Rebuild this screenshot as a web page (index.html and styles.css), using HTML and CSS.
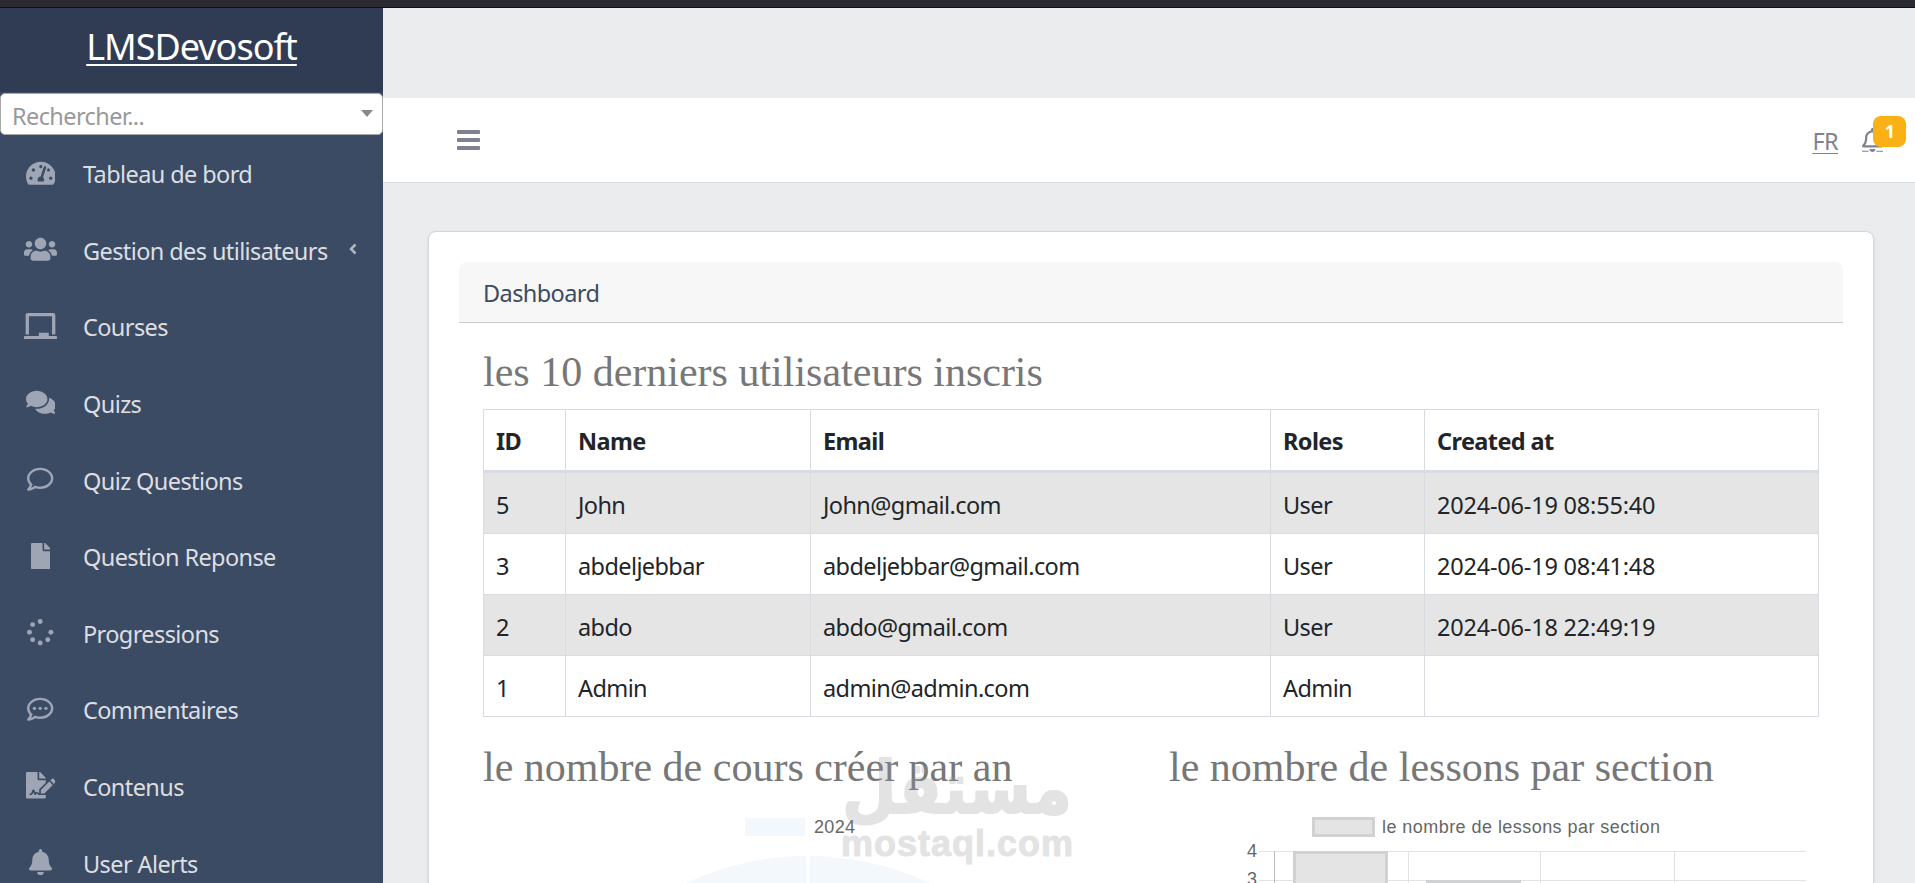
FILE: index.html
```html
<!DOCTYPE html>
<html lang="fr">
<head>
    <meta charset="UTF-8">
    <title>LMSDevosoft</title>
    <link rel="stylesheet" href="styles.css">
</head>
<body>
    <div class="window-edge"></div>

    <div class="wrapper">
        <aside class="sidebar">
            <div class="sidebar-brand"><a href="#">LMSDevosoft</a></div>
            <div class="search-select">
                <span>Rechercher...</span>
                <i class="caret"></i>
            </div>
            <nav class="sidebar-nav">
                <a class="nav-item">
                    <span class="nav-icon"><svg viewBox="0 0 576 512"><path d="M288 32C128.94 32 0 160.94 0 320c0 52.8 14.25 102.26 39.06 144.8 5.61 9.62 16.3 15.2 27.44 15.2h443c11.14 0 21.83-5.58 27.44-15.2C561.75 422.26 576 372.8 576 320c0-159.06-128.94-288-288-288zm0 64c14.71 0 26.58 10.13 30.32 23.65-1.11 2.26-2.64 4.23-3.45 6.67l-9.22 27.67c-5.13 3.49-10.97 6.01-17.64 6.01-17.67 0-32-14.33-32-32S270.33 96 288 96zM96 384c-17.67 0-32-14.33-32-32s14.33-32 32-32 32 14.33 32 32-14.33 32-32 32zm48-160c-17.67 0-32-14.33-32-32s14.33-32 32-32 32 14.33 32 32-14.33 32-32 32zm246.77-72.41l-61.33 184C343.13 347.33 352 364.54 352 384c0 11.72-3.38 22.55-8.88 32H232.88c-5.5-9.45-8.88-20.28-8.88-32 0-33.94 26.5-61.43 59.9-63.59l61.34-184.01c4.17-12.56 17.73-19.45 30.36-15.17 12.57 4.19 19.35 17.79 15.17 30.36zm14.66 57.2l15.52-46.55c3.47-1.29 7.13-2.23 11.05-2.23 17.67 0 32 14.33 32 32s-14.33 32-32 32c-11.38-.01-20.89-6.28-26.57-15.22zM480 384c-17.67 0-32-14.33-32-32s14.33-32 32-32 32 14.33 32 32-14.33 32-32 32z"/></svg></span>
                    <span>Tableau de bord</span>
                </a>
                <a class="nav-item">
                    <span class="nav-icon"><svg viewBox="0 0 640 512"><path d="M96 224c35.3 0 64-28.7 64-64s-28.7-64-64-64-64 28.7-64 64 28.7 64 64 64zm448 0c35.3 0 64-28.7 64-64s-28.7-64-64-64-64 28.7-64 64 28.7 64 64 64zm32 32h-64c-17.6 0-33.5 7.1-45.1 18.6 40.3 22.1 68.9 62 75.1 109.4h66c17.7 0 32-14.3 32-32v-32c0-35.3-28.7-64-64-64zm-256 0c61.9 0 112-50.1 112-112S381.9 32 320 32 208 82.1 208 144s50.1 112 112 112zm76.8 32h-8.3c-20.8 10-43.9 16-68.5 16s-47.6-6-68.5-16h-8.3C179.6 288 128 339.6 128 403.2V432c0 26.5 21.5 48 48 48h288c26.5 0 48-21.5 48-48v-28.8c0-63.6-51.6-115.2-115.2-115.2zm-223.7-13.4C161.5 263.1 145.6 256 128 256H64c-35.3 0-64 28.7-64 64v32c0 17.7 14.3 32 32 32h65.9c6.3-47.4 34.9-87.3 75.2-109.4z"/></svg></span>
                    <span>Gestion des utilisateurs</span>
                    <svg class="nav-arrow" viewBox="0 0 8 12"><path d="M6.5 1.5L2 6l4.5 4.5"/></svg>
                </a>
                <a class="nav-item">
                    <span class="nav-icon"><svg viewBox="0 0 640 512"><path d="M96 64h448v352h64V40c0-22.06-17.94-40-40-40H72C49.94 0 32 17.94 32 40v376h64V64zm528 384H480v-64H288v64H16c-8.84 0-16 7.16-16 16v32c0 8.84 7.16 16 16 16h608c8.84 0 16-7.16 16-16v-32c0-8.84-7.16-16-16-16z"/></svg></span>
                    <span>Courses</span>
                </a>
                <a class="nav-item">
                    <span class="nav-icon"><svg viewBox="0 0 576 512"><path d="M416 192c0-88.4-93.1-160-208-160S0 103.6 0 192c0 34.3 14.1 65.9 38 92-13.4 30.2-35.5 54.2-35.8 54.5-2.2 2.3-2.8 5.7-1.5 8.7S4.8 352 8 352c36.6 0 66.9-12.3 88.7-25 32.2 15.7 70.3 25 111.3 25 114.9 0 208-71.6 208-160zm122 220c23.9-26 38-57.7 38-92 0-66.9-53.5-124.2-129.3-148.1.9 6.6 1.3 13.3 1.3 20.1 0 105.9-107.7 192-240 192-10.8 0-21.3-.8-31.7-1.9C207.8 439.6 281.8 480 368 480c41 0 79.1-9.2 111.3-25 21.8 12.7 52.1 25 88.7 25 3.2 0 6.1-1.9 7.3-4.8 1.3-2.9.7-6.3-1.5-8.7-.3-.3-22.4-24.2-35.8-54.5z"/></svg></span>
                    <span>Quizs</span>
                </a>
                <a class="nav-item">
                    <span class="nav-icon"><svg viewBox="0 0 512 512"><path d="M256 32C114.6 32 0 125.1 0 240c0 47.6 19.9 91.2 52.9 126.3C38 405.7 7 439.1 6.5 439.5c-6.6 7-8.4 17.2-4.6 26S14.4 480 24 480c61.5 0 110-25.7 139.1-46.3C192 442.8 223.2 448 256 448c141.4 0 256-93.1 256-208S397.4 32 256 32zm0 368c-26.7 0-53.1-4.1-78.4-12.1l-22.7-7.2-19.5 13.8c-14.3 10.1-33.9 21.4-57.5 29 7.3-12.1 14.4-25.7 19.9-40.2l10.6-28.1-20.6-21.8C69.7 314.1 48 282.2 48 240c0-88.2 93.3-160 208-160s208 71.8 208 160-93.3 160-208 160z"/></svg></span>
                    <span>Quiz Questions</span>
                </a>
                <a class="nav-item">
                    <span class="nav-icon"><svg viewBox="0 0 384 512"><path d="M224 136V0H24C10.7 0 0 10.7 0 24v464c0 13.3 10.7 24 24 24h336c13.3 0 24-10.7 24-24V160H248c-13.2 0-24-10.8-24-24zm160-14.1v6.1H256V0h6.1c6.4 0 12.5 2.5 17 7l97.9 98c4.5 4.5 7 10.6 7 16.9z"/></svg></span>
                    <span>Question Reponse</span>
                </a>
                <a class="nav-item">
                    <span class="nav-icon"><svg viewBox="0 0 512 512"><circle cx="256" cy="48" r="48"/><circle cx="256" cy="464" r="48"/><circle cx="464" cy="256" r="48"/><circle cx="48" cy="256" r="48"/><circle cx="109" cy="109" r="48"/><circle cx="109" cy="403" r="48"/><circle cx="403" cy="403" r="48"/></svg></span>
                    <span>Progressions</span>
                </a>
                <a class="nav-item">
                    <span class="nav-icon"><svg viewBox="0 0 512 512"><path d="M256 32C114.6 32 0 125.1 0 240c0 47.6 19.9 91.2 52.9 126.3C38 405.7 7 439.1 6.5 439.5c-6.6 7-8.4 17.2-4.6 26S14.4 480 24 480c61.5 0 110-25.7 139.1-46.3C192 442.8 223.2 448 256 448c141.4 0 256-93.1 256-208S397.4 32 256 32zm0 368c-26.7 0-53.1-4.1-78.4-12.1l-22.7-7.2-19.5 13.8c-14.3 10.1-33.9 21.4-57.5 29 7.3-12.1 14.4-25.7 19.9-40.2l10.6-28.1-20.6-21.8C69.7 314.1 48 282.2 48 240c0-88.2 93.3-160 208-160s208 71.8 208 160-93.3 160-208 160z"/><circle cx="144" cy="240" r="32"/><circle cx="256" cy="240" r="32"/><circle cx="368" cy="240" r="32"/></svg></span>
                    <span>Commentaires</span>
                </a>
                <a class="nav-item">
                    <span class="nav-icon"><svg viewBox="0 0 576 512"><path d="M218.17 424.14c-2.95-5.92-8.09-6.52-10.17-6.52s-7.22.59-10.02 6.19l-7.67 15.34c-6.37 12.78-25.03 11.37-29.48-2.09L144 386.59l-10.61 31.88c-5.89 17.66-22.38 29.53-41 29.53H80c-8.84 0-16-7.16-16-16s7.16-16 16-16h12.39c4.83 0 9.11-3.08 10.64-7.66l18.19-54.64c3.3-9.81 12.44-16.41 22.78-16.41s19.48 6.59 22.77 16.41l13.88 41.64c19.75-16.19 54.06-9.7 66 14.16 1.89 3.78 5.49 5.95 9.36 6.26v-82.12l128-127.09V160H248c-13.2 0-24-10.8-24-24V0H24C10.7 0 0 10.7 0 24v464c0 13.3 10.7 24 24 24h336c13.3 0 24-10.7 24-24v-40l-128-.11c-16.12-.31-30.58-9.28-37.83-23.75zM384 121.9c0-6.3-2.5-12.4-7-16.9L279.1 7c-4.5-4.5-10.6-7-17-7H256v128h128v-6.1zm-96 225.06V416h68.99l161.68-162.78-67.88-67.88L288 346.96zm280.54-179.63l-31.87-31.87c-9.94-9.94-26.07-9.94-36.01 0l-27.25 27.25 67.88 67.88 27.25-27.25c9.95-9.94 9.95-26.07 0-36.01z"/></svg></span>
                    <span>Contenus</span>
                </a>
                <a class="nav-item">
                    <span class="nav-icon"><svg viewBox="0 0 448 512"><path d="M224 512c35.32 0 63.97-28.65 63.97-64H160.03c0 35.35 28.65 64 63.97 64zm215.39-149.71c-19.32-20.76-55.47-51.99-55.47-154.29 0-77.7-54.48-139.9-127.94-155.16V32c0-17.67-14.32-32-31.98-32s-31.98 14.33-31.98 32v20.84C118.56 68.1 64.08 130.3 64.08 208c0 102.3-36.15 133.53-55.47 154.29-6 6.45-8.66 14.16-8.61 21.71.11 16.4 12.98 32 32.1 32h383.8c19.12 0 32-15.6 32.1-32 .05-7.55-2.61-15.27-8.61-21.71z"/></svg></span>
                    <span>User Alerts</span>
                </a>
            </nav>
        </aside>

        <div class="content">
            <header class="topbar">
                <button class="menu-toggle"><i></i><i></i><i></i></button>
                <div class="topbar-right">
                    <a class="lang" href="#">FR</a>
                    <a class="alerts" href="#">
                        <svg viewBox="0 0 448 512"><path d="M439.39 362.29c-19.32-20.76-55.47-51.99-55.47-154.29 0-77.7-54.48-139.9-127.94-155.16V32c0-17.67-14.32-32-31.98-32s-31.98 14.33-31.98 32v20.84C118.56 68.1 64.08 130.3 64.08 208c0 102.3-36.15 133.53-55.47 154.29-6 6.45-8.66 14.16-8.61 21.71.11 16.4 12.98 32 32.1 32h383.8c19.12 0 32-15.6 32.1-32 .05-7.55-2.61-15.27-8.61-21.71zM67.53 368c21.22-27.97 44.42-74.33 44.53-159.42 0-.2-.06-.38-.06-.58 0-61.86 50.14-112 112-112s112 50.14 112 112c0 .2-.06.38-.06.58.11 85.1 23.31 131.46 44.53 159.42H67.53zM224 512c35.32 0 63.97-28.65 63.97-64H160.03c0 35.35 28.65 64 63.97 64zM0 484h140v20H0zM308 484h140v20H308z"/></svg>
                        <span class="badge">1</span>
                    </a>
                </div>
            </header>

            <main class="card">
                <div class="card-header">Dashboard</div>
                <div class="card-body">
                    <h3>les 10 derniers utilisateurs inscris</h3>
                    <table class="users-table">
                        <colgroup>
                            <col class="col-id"><col class="col-name"><col class="col-email"><col class="col-roles"><col>
                        </colgroup>
                        <thead>
                            <tr><th>ID</th><th>Name</th><th>Email</th><th>Roles</th><th>Created at</th></tr>
                        </thead>
                        <tbody>
                            <tr><td>5</td><td>John</td><td>John@gmail.com</td><td>User</td><td class="date">2024-06-19 08:55:40</td></tr>
                            <tr><td>3</td><td>abdeljebbar</td><td>abdeljebbar@gmail.com</td><td>User</td><td class="date">2024-06-19 08:41:48</td></tr>
                            <tr><td>2</td><td>abdo</td><td>abdo@gmail.com</td><td>User</td><td class="date">2024-06-18 22:49:19</td></tr>
                            <tr><td>1</td><td>Admin</td><td>admin@admin.com</td><td>Admin</td><td></td></tr>
                        </tbody>
                    </table>

                    <div class="charts">
                        <section>
                            <h3>le nombre de cours créer par an</h3>
                            <svg class="chart" width="650" height="600" viewBox="0 0 650 600">
                                <rect class="pie-fill" x="262" y="13" width="60" height="18"/>
                                <text x="331" y="28" textLength="41">2024</text>
                                <circle class="pie-fill" cx="325" cy="340" r="289"/>
                                <path class="pie-gap" d="M325 48v292"/>
                            </svg>
                        </section>
                        <section>
                            <h3>le nombre de lessons par section</h3>
                            <svg class="chart" width="650" height="600" viewBox="0 0 650 600">
                                <rect class="bar" x="144.5" y="13.5" width="60" height="17"/>
                                <text x="213" y="28" textLength="278">le nombre de lessons par section</text>
                                <text class="tick" x="88" y="51.5">4</text>
                                <text class="tick" x="88" y="80">3</text>
                                <path class="grid" d="M90 46.5h547M90 75.5h547M239.5 46v300M371.5 46v300M505.5 46v300"/>
                                <path class="axis" d="M105.5 46v300"/>
                                <path class="bar" d="M125.5 346V47.5h92V346M258.5 346V76.5h92V346"/>
                            </svg>
                        </section>
                    </div>
                </div>
            </main>
        </div>
    </div>

    <svg class="watermark" width="240" height="120" viewBox="0 0 240 120">
        <text class="wm-arabic" x="5" y="58" textLength="230" lengthAdjust="spacingAndGlyphs">مستقل</text>
        <text class="wm-latin" x="4" y="101" textLength="232">mostaql.com</text>
    </svg>
</body>
</html>
```
FILE: styles.css
```css
* {
    box-sizing: border-box;
}

body {
    margin: 0;
    height: 883px;
    overflow: hidden;
    background: #ebecee;
    font-family: 'Noto Sans', 'Open Sans', sans-serif;
    font-size: 23.5px;
    letter-spacing: -0.6px;
    color: #212529;
}

.window-edge {
    height: 8px;
    background: #2b2a33;
    border-bottom: 1px solid #101014;
}

.wrapper {
    display: flex;
    height: 875px;
    overflow: hidden;
}

/* Sidebar */
.sidebar {
    width: 383px;
    flex-shrink: 0;
    background: #3c4b64;
    overflow: hidden;
}

.sidebar-brand {
    height: 84px;
    background: #303c54;
    text-align: center;
    font-size: 36px;
    line-height: 77px;
    letter-spacing: -1px;
}

.sidebar-brand a {
    color: #fff;
    text-underline-offset: 4px;
    text-decoration-thickness: 2px;
    text-decoration-skip-ink: none;
}

.search-select {
    display: flex;
    align-items: center;
    justify-content: space-between;
    height: 42px;
    margin-top: 1px;
    padding: 4px 9px 0 11px;
    background: #fff;
    border: 1px solid #aaa;
    border-radius: 5px;
    color: #999;
}

.caret {
    border: 6px solid transparent;
    border-top: 7px solid #888;
    border-bottom: 0;
    margin-top: -5px;
}

.sidebar-nav {
    padding-top: 1px;
}

.nav-item {
    display: flex;
    align-items: center;
    height: 76.6px;
    color: #dcdee2;
}

.nav-icon {
    width: 83px;
    display: flex;
    justify-content: center;
}

.nav-icon svg {
    height: 26.4px;
    fill: #9ea5b4;
    margin: 0 2px 3px 0;
}

.nav-arrow {
    width: 8px;
    height: 12px;
    margin: -4px 0 0 21px;
    fill: none;
    stroke: #b1b7c1;
    stroke-width: 2.5;
}

/* Top bar */
.content {
    flex: 1;
    padding-top: 90px;
}

.topbar {
    height: 85px;
    display: flex;
    align-items: center;
    justify-content: space-between;
    background: #fff;
    border-bottom: 1px solid #d8dbe0;
    padding: 0 32px 0 74px;
}

.menu-toggle {
    display: flex;
    flex-direction: column;
    gap: 4px;
    padding: 0;
    border: 0;
    background: none;
}

.menu-toggle i {
    width: 23px;
    height: 4px;
    border-radius: 1px;
    background: #80808f;
}

.topbar-right {
    display: flex;
    align-items: center;
    color: #80818f;
}

.topbar a {
    color: inherit;
    text-underline-offset: 3px;
    text-decoration-thickness: 1px;
}

.lang {
    padding-top: 2px;
}

.alerts {
    position: relative;
    margin-left: 24px;
    height: 24px;
}

.alerts svg {
    display: block;
    height: 24px;
    fill: #80818f;
}

.badge {
    position: absolute;
    left: 11px;
    top: -12px;
    width: 33px;
    height: 31px;
    border-radius: 8px;
    background: #f9b115;
    color: #fff;
    font-size: 18px;
    font-weight: 700;
    line-height: 31px;
    text-align: center;
}

/* Dashboard card */
.card {
    height: 900px;
    margin: 48px 41px 0 45px;
    padding: 30px;
    background: #fff;
    border: 1px solid #d3d5d9;
    border-radius: 8px;
    box-shadow: 0 2px 4px rgba(0, 0, 0, 0.08);
}

.card-header {
    height: 61px;
    padding-left: 24px;
    line-height: 62px;
    background: #f7f7f7;
    border-bottom: 1px solid #c8cacc;
    border-radius: 8px 8px 0 0;
    color: #3c4b64;
}

.card-body {
    padding: 24px;
}

h3 {
    margin: 0;
    font-family: 'Liberation Serif', serif;
    font-size: 42px;
    font-weight: 400;
    line-height: 50px;
    letter-spacing: 0;
    white-space: nowrap;
    color: #777;
}

.users-table {
    width: 1336px;
    margin-top: 12px;
    border-collapse: collapse;
    table-layout: fixed;
}

.col-id {
    width: 82px;
}

.col-name {
    width: 245px;
}

.col-email {
    width: 460px;
}

.col-roles {
    width: 154px;
}

.users-table th,
.users-table td {
    height: 61px;
    padding: 3px 12px 0;
    border: 1px solid #d8dbe0;
    text-align: left;
}

.users-table th {
    height: 62px;
    padding-top: 2px;
    border-bottom: 3px solid #d8dbe0;
}

.users-table tbody tr:nth-child(odd) {
    background: #e5e5e5;
}

.users-table tbody tr:first-child td {
    height: 62px;
}

.users-table .date {
    letter-spacing: -0.2px;
}

.charts {
    display: grid;
    grid-template-columns: 650px 650px;
    gap: 36px;
    margin-top: 25px;
}

.chart {
    display: block;
    margin-top: 13px;
}

.chart text {
    font: 18px 'Liberation Sans', sans-serif;
    letter-spacing: 0;
    fill: #666;
}

.chart .tick {
    text-anchor: end;
}

.pie-fill {
    fill: #f3f8fd;
}

.pie-gap {
    stroke: #fff;
    stroke-width: 3;
}

.grid {
    fill: none;
    stroke: #e2e3e4;
}

.axis {
    stroke: #b8bbc0;
}

.bar {
    fill: #e4e4e4;
    stroke: #d0d1d3;
    stroke-width: 3;
}

.watermark {
    position: absolute;
    left: 837px;
    top: 755px;
    fill: #999;
    stroke: #999;
    stroke-linejoin: round;
    opacity: 0.27;
    letter-spacing: 0;
}

.wm-arabic {
    font: bold 72px 'DejaVu Sans', sans-serif;
    stroke-width: 2;
}

.wm-latin {
    font: bold 36px 'Liberation Sans', sans-serif;
    stroke-width: 1;
}
```
